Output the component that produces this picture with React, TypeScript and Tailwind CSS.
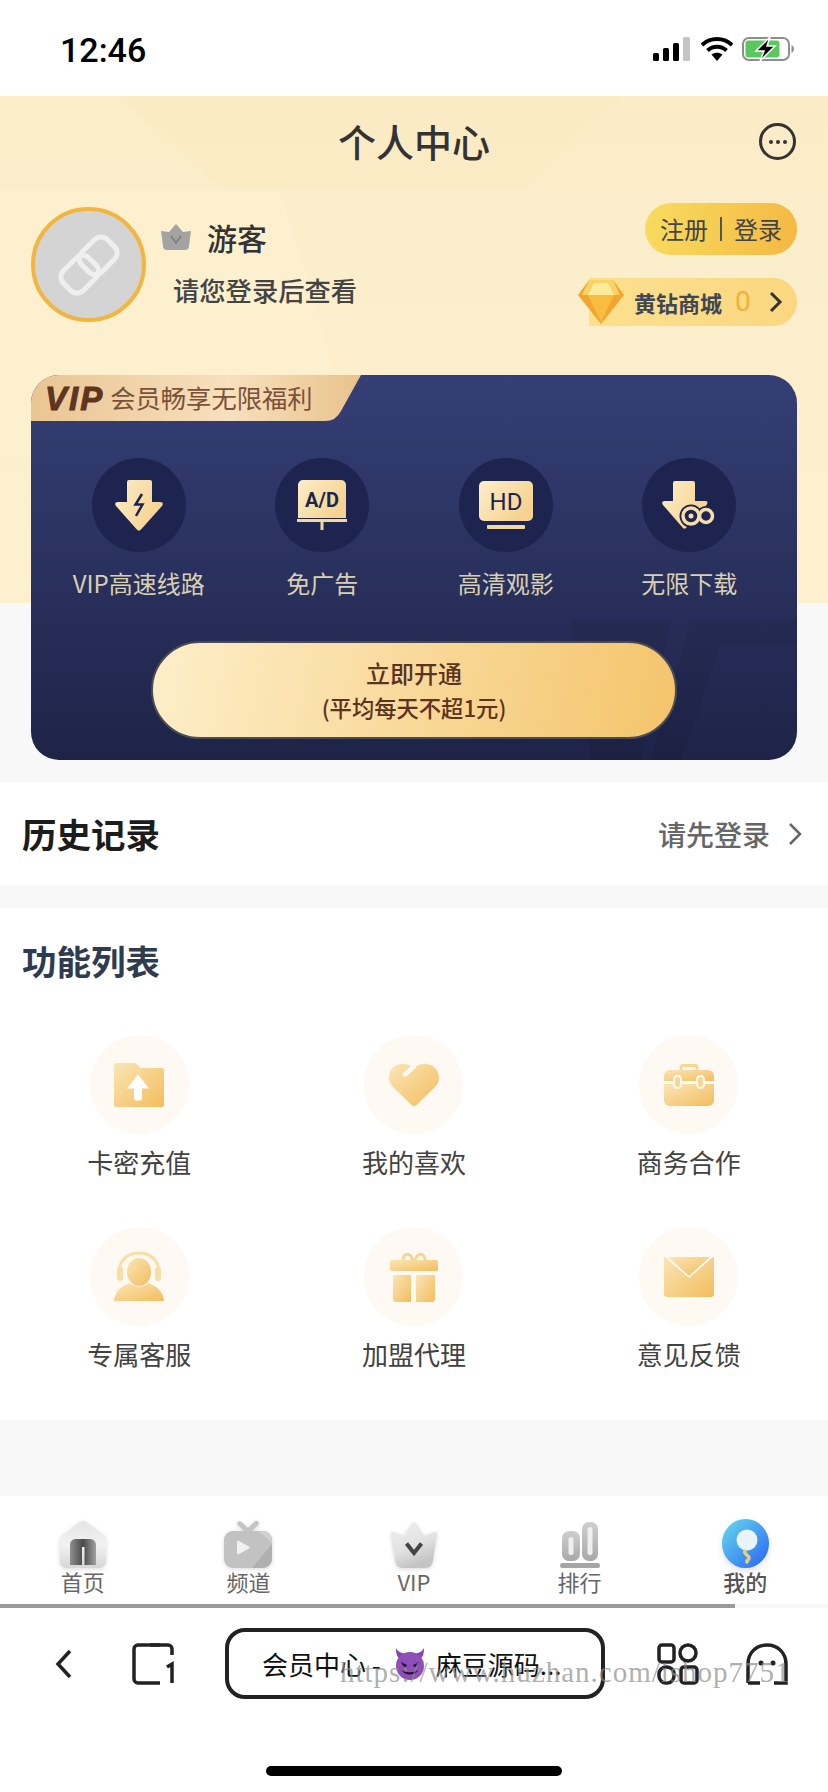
import type { ReactNode } from 'react';

const CJK = 'font-["Noto_Sans_CJK_SC","Noto_Sans",sans-serif]';

function GoldDefs({ id }: { id: string }) {
  return (
    <defs>
      <linearGradient id={id} x1="0" y1="0" x2="1" y2="1">
        <stop offset="0" stopColor="#fbe5b6" />
        <stop offset="1" stopColor="#f2bd5e" />
      </linearGradient>
    </defs>
  );
}

function VipGoldDefs({ id }: { id: string }) {
  return (
    <defs>
      <linearGradient id={id} x1="0" y1="0" x2="1" y2="0.6">
        <stop offset="0" stopColor="#fdeec9" />
        <stop offset="1" stopColor="#f5d28f" />
      </linearGradient>
    </defs>
  );
}

function SpeedIcon() {
  return (
    <svg width="48" height="51" viewBox="0 0 48 51">
      <VipGoldDefs id="v1" />
      <path d="M12 2a2 2 0 0 1 2-2h21a2 2 0 0 1 2 2v20h8c3 0 3.500 2 2 4L26 49.500c-1.200 1.500-3 1.500-4.200 0L1 26c-1.500-2-1-4 2-4h9z" fill="url(#v1)" />
      <path d="M27 14l-6.500 10.500h7L21 36" fill="none" stroke="#1e2450" strokeWidth="2.500" />
    </svg>
  );
}

function AdIcon() {
  return (
    <svg width="50" height="50" viewBox="0 0 50 50">
      <VipGoldDefs id="v2" />
      <path d="M6 0h38a5 5 0 0 1 5 5v33H1V5a5 5 0 0 1 5-5z" fill="url(#v2)" />
      <text x="25" y="27" textAnchor="middle" fontSize="20" fontWeight="700" fill="#1e2450" fontFamily="Roboto, sans-serif">A/D</text>
      <rect x="0" y="39" width="50" height="3" fill="#f3d7a0" />
      <rect x="23.500" y="42" width="3" height="8" fill="#f3d7a0" />
    </svg>
  );
}

function HdIcon() {
  return (
    <svg width="54" height="48" viewBox="0 0 54 48">
      <VipGoldDefs id="v3" />
      <rect x="0" y="0" width="54" height="40" rx="5" fill="url(#v3)" />
      <text x="27" y="28.500" textAnchor="middle" fontSize="24" fontWeight="400" fill="#1e2450" fontFamily="Roboto, sans-serif">HD</text>
      <rect x="8" y="44" width="38" height="4" rx="1" fill="#f3d7a0" />
    </svg>
  );
}

function InfiniteIcon() {
  return (
    <svg width="54" height="48" viewBox="0 0 54 48">
      <VipGoldDefs id="v4" />
      <path d="M11 2a2 2 0 0 1 2-2h18a2 2 0 0 1 2 2v18h10c3 0 3 2 1.500 4L24 47c-1 1-2 1-3 0L1 24c-1.500-2-1-4 2-4h8z" fill="url(#v4)" />
      <circle cx="29" cy="35" r="11.500" fill="#1e2450" />
      <circle cx="44" cy="35" r="10" fill="#1e2450" />
      <circle cx="29" cy="35" r="8" fill="none" stroke="#f7dda9" strokeWidth="3.500" />
      <circle cx="29" cy="35" r="2.500" fill="#f7dda9" />
      <circle cx="44" cy="35" r="6.500" fill="none" stroke="#f7dda9" strokeWidth="3.500" />
    </svg>
  );
}

function FolderIcon() {
  return (
    <svg width="50" height="44" viewBox="0 0 50 44">
      <GoldDefs id="f1" />
      <path d="M2 0h19l6 5h21a2 2 0 0 1 2 2v35a2 2 0 0 1-2 2H2a2 2 0 0 1-2-2V2a2 2 0 0 1 2-2z" fill="url(#f1)" />
      <path d="M24 12l11 14h-7v10a2 2 0 0 1-2 2h-4a2 2 0 0 1-2-2V26h-7z" fill="#fff" transform="translate(0 -0.500)" />
    </svg>
  );
}

function HeartIcon() {
  return (
    <svg width="50" height="42" viewBox="0 0 50 42">
      <GoldDefs id="f2" />
      <path d="M13 0c5 0 9 1.500 12 4 3-2.500 6-4 11-4 8 0 14 6 14 14 0 4-2 7-5 10L28 40.500c-2 2-4 2-6 0L5 24c-3-3-5-6-5-10C0 6 5 0 13 0z" fill="url(#f2)" />
      <path d="M16 10.500l9-8" fill="none" stroke="#fef9f3" strokeWidth="4.500" strokeLinecap="round" />
    </svg>
  );
}

function CaseIcon() {
  return (
    <svg width="50" height="42" viewBox="0 0 50 42">
      <GoldDefs id="f3" />
      <path d="M17 7V3.500a2 2 0 0 1 2-2h12a2 2 0 0 1 2 2V7" fill="none" stroke="#f7d794" strokeWidth="3" />
      <path d="M6 6h38a6 6 0 0 1 6 6v5H0v-5a6 6 0 0 1 6-6z" fill="url(#f3)" />
      <path d="M0 20h50v16a6 6 0 0 1-6 6H6a6 6 0 0 1-6-6z" fill="url(#f3)" />
      <rect x="0" y="17" width="50" height="3" fill="#fef9f3" />
      <rect x="10" y="12" width="7" height="12" rx="3.500" fill="#f7d794" stroke="#fef9f3" strokeWidth="2" />
      <rect x="33" y="12" width="7" height="12" rx="3.500" fill="#f7d794" stroke="#fef9f3" strokeWidth="2" />
    </svg>
  );
}

function AgentIcon() {
  return (
    <svg width="50" height="50" viewBox="0 0 50 50">
      <GoldDefs id="f4" />
      <path d="M5 21C5 9 13 1 25 1s20 8 20 20" fill="none" stroke="#f9dda3" strokeWidth="3" />
      <rect x="3" y="15" width="6" height="14" rx="3" fill="#f9dda3" />
      <rect x="41" y="15" width="6" height="14" rx="3" fill="#f9dda3" />
      <ellipse cx="25" cy="20" rx="12" ry="14" fill="url(#f4)" />
      <path d="M16 31c4 5 14 5 18 0 9 3 15 8 16 18H0c1-10 7-15 16-18z" fill="url(#f4)" />
    </svg>
  );
}

function GiftIcon() {
  return (
    <svg width="48" height="50" viewBox="0 0 48 50">
      <GoldDefs id="f5" />
      <path d="M13 9c0-9 8-9 10 0M25 9c2-9 10-9 10 0" fill="none" stroke="#f6d592" strokeWidth="3" />
      <rect x="0" y="8" width="48" height="11" rx="2" fill="url(#f5)" />
      <path d="M3 23h18v27H6a3 3 0 0 1-3-3z" fill="url(#f5)" />
      <path d="M26 23h19v24a3 3 0 0 1-3 3H26z" fill="url(#f5)" />
    </svg>
  );
}

function MailIcon() {
  return (
    <svg width="50" height="40" viewBox="0 0 50 40">
      <GoldDefs id="f6" />
      <path d="M1 0l24 21L49 0c.700 0 1 .500 1 1v36a3 3 0 0 1-3 3H3a3 3 0 0 1-3-3V1c0-.500.300-1 1-1z" fill="url(#f6)" />
      <path d="M4 0h42L25 19z" fill="url(#f6)" />
    </svg>
  );
}

function HomeTab() {
  return (
    <svg width="46" height="47" viewBox="0 0 46 47" className="drop-shadow-sm">
      <defs>
        <linearGradient id="t1" x1="0" y1="0" x2="0" y2="1">
          <stop offset="0" stopColor="#e4e4e4" />
          <stop offset="0.500" stopColor="#f2f2f2" />
          <stop offset="1" stopColor="#d6d6d6" />
        </linearGradient>
        <linearGradient id="t1b" x1="0" y1="0" x2="1" y2="0">
          <stop offset="0" stopColor="#8f8f8f" />
          <stop offset="0.500" stopColor="#4a4a4a" />
          <stop offset="1" stopColor="#a0a0a0" />
        </linearGradient>
      </defs>
      <path d="M20 1c2-1.300 4-1.300 6 0l16 12c2.500 2 4 4 4 7v20a7 7 0 0 1-7 7H7a7 7 0 0 1-7-7V20c0-3 1.500-5 4-7z" fill="url(#t1)" />
      <path d="M10 44V24c0-4 3-6 6-6h14c4 0 6 3 6 6v20H24.500V26h-2.500v18z" fill="url(#t1b)" />
    </svg>
  );
}

function ChannelTab() {
  return (
    <svg width="48" height="47" viewBox="0 0 48 47" className="drop-shadow-sm">
      <path d="M14 1c1-1 2.500-1 3.500 0L24 7l6.500-6.500c1-1 2.500-1 3.500 0s1 2.500 0 3.500l-8 8h-4l-8-8c-1-1-1-2.500 0-3.500z" fill="#c4c4c4" />
      <rect x="0" y="10" width="48" height="37" rx="9" fill="#c2c2c2" />
      <path d="M28 47l20-24v15a9 9 0 0 1-9 9z" fill="#b0b0b0" />
      <path d="M35 10l13 12v-3a9 9 0 0 0-9-9z" fill="#d0d0d0" />
      <path d="M13 21c0-1 1-1.500 2-1l10 5.500c1 .500 1 1.500 0 2L15 33c-1 .500-2 0-2-1z" fill="#f1f1f1" />
    </svg>
  );
}

function VipTab() {
  return (
    <svg width="46" height="46" viewBox="0 0 46 46" className="drop-shadow-sm">
      <defs>
        <linearGradient id="t3" x1="0" y1="0" x2="0.400" y2="1">
          <stop offset="0" stopColor="#efefef" />
          <stop offset="0.600" stopColor="#e2e2e2" />
          <stop offset="1" stopColor="#c4c4c4" />
        </linearGradient>
      </defs>
      <path d="M21.500 1c1-1.300 2-1.300 3 0L33 14l11-4c1-.500 2 0 2 1.500L42 38c-.500 5-3 8-8 8H12c-5 0-7.500-3-8-8L0 11.500C0 10 1 9.500 2 10l11 4z" fill="url(#t3)" />
      <path d="M15.500 21.500L23 31l7.500-9.500" fill="none" stroke="#444" strokeWidth="4" />
    </svg>
  );
}

function RankTab() {
  return (
    <svg width="40" height="46" viewBox="0 0 40 46">
      <defs>
        <linearGradient id="t4" x1="0" y1="0" x2="0" y2="1">
          <stop offset="0" stopColor="#cfcfcf" />
          <stop offset="1" stopColor="#a8a8a8" />
        </linearGradient>
      </defs>
      <rect x="2" y="9" width="18" height="30" rx="7" fill="url(#t4)" />
      <rect x="8.500" y="15" width="5" height="18" rx="2.500" fill="#efefef" />
      <rect x="22" y="0" width="16" height="39" rx="7" fill="url(#t4)" />
      <rect x="27.500" y="5" width="5" height="28" rx="2.500" fill="#efefef" />
      <rect x="0" y="41" width="40" height="5" rx="2.500" fill="#a6a6a6" />
    </svg>
  );
}

function MeTab() {
  return (
    <svg width="47" height="49" viewBox="0 0 47 49" className="drop-shadow-md">
      <defs>
        <linearGradient id="t5" x1="0.100" y1="0.100" x2="0.900" y2="0.900">
          <stop offset="0" stopColor="#60d0ee" />
          <stop offset="1" stopColor="#2f6ff2" />
        </linearGradient>
      </defs>
      <ellipse cx="23.500" cy="24.500" rx="23.500" ry="24.500" fill="url(#t5)" />
      <circle cx="25" cy="21" r="10.500" fill="#e8f3fb" />
      <path d="M23 32c-2 3 4 4 4 7s-3 2-2 4" fill="none" stroke="#e9cf7c" strokeWidth="3.500" strokeLinecap="round" />
    </svg>
  );
}

function DevilEmoji() {
  return (
    <svg width="34" height="34" viewBox="0 0 34 34" className="shrink-0">
      <path d="M3 1c0 6 1 9 4 11l6-5C9 6 5 5 3 1zM31 1c0 6-1 9-4 11l-6-5c4-1 8-2 10-6z" fill="#8a44ad" />
      <circle cx="17" cy="19" r="14" fill="#8e4fb8" />
      <path d="M8 15l6 3-1 2c-2 0-4-2-5-5zM26 15l-6 3 1 2c2 0 4-2 5-5z" fill="#2a1536" />
      <path d="M9 23c3 3 13 3 16 0-2 6-14 6-16 0z" fill="#2a1536" />
    </svg>
  );
}

function Feature({ icon, label }: { icon: ReactNode; label: string }) {
  return (
    <div className="flex flex-col items-center">
      <div className="flex h-[99px] w-[99px] items-center justify-center rounded-full bg-[#fef9f3]">{icon}</div>
      <span className="mt-[9px] text-[26px] leading-[38px] text-[#424242]">{label}</span>
    </div>
  );
}

function Perk({ icon, label }: { icon: ReactNode; label: string }) {
  return (
    <div className="flex flex-col items-center">
      <div className="flex h-[94px] w-[94px] items-center justify-center rounded-full bg-[#1e2450]">{icon}</div>
      <span className="mt-[13px] text-[24px] leading-[36px] text-[#d9d0b1]">{label}</span>
    </div>
  );
}

function Tab({ icon, label, active }: { icon: ReactNode; label: string; active?: boolean }) {
  return (
    <div className="flex flex-col items-center">
      <div className="flex h-[52px] items-end">{icon}</div>
      <span className={`-mt-px text-[22px] leading-[28px] ${active ? 'font-medium text-[#555]' : 'text-[#666]'}`}>{label}</span>
    </div>
  );
}

export default function App() {
  return (
    <div className={`relative flex h-[1792px] w-[828px] flex-col overflow-hidden bg-[#f8f8f9] ${CJK}`}>
      {/* status bar */}
      <div className="flex h-[96px] shrink-0 items-center justify-between bg-white pl-[60px] pr-[34px] pt-[2px]">
        <span className="mt-[2px] font-['Roboto',sans-serif] text-[34px] font-medium text-black">12:46</span>
        <div className="flex items-center">
          <svg width="38" height="24" viewBox="0 0 38 24">
            <rect x="0" y="16" width="6" height="8" rx="1.500" fill="#000" />
            <rect x="10" y="11" width="6" height="13" rx="1.500" fill="#000" />
            <rect x="20" y="6" width="6" height="18" rx="1.500" fill="#000" />
            <rect x="30" y="0" width="7" height="24" rx="1.500" fill="#c4c4c4" />
          </svg>
          <svg width="32" height="24" viewBox="0 0 32 24" className="ml-[10px]">
            <path d="M1 8c8.500-8 21.500-8 30 0" fill="none" stroke="#000" strokeWidth="4" />
            <path d="M6.500 13.500c5.500-5 13.500-5 19 0" fill="none" stroke="#000" strokeWidth="4" />
            <path d="M10.500 17.500L16 24l5.500-6.500c-3.500-2.500-7.500-2.500-11 0z" fill="#000" />
          </svg>
          <svg width="52" height="26" viewBox="0 0 52 26" className="ml-[9px]">
            <rect x="1" y="2" width="46" height="22" rx="6" fill="none" stroke="#8e8e8e" strokeWidth="2" />
            <rect x="3.500" y="4.500" width="34" height="17" rx="3" fill="#5ac85f" />
            <path d="M49.500 9c1.500 1 2.500 2.500 2.500 4s-1 3-2.500 4z" fill="#8e8e8e" />
            <path d="M28 1L14 15h8l-4 10 15-15h-8l3-9z" fill="#000" stroke="#fff" strokeWidth="1.500" />
          </svg>
        </div>
      </div>

      {/* header + vip card share this backdrop */}
      <div className="relative h-[686px] shrink-0 bg-[linear-gradient(#fbedc8_0,#fdf0ce_507px,#f8f8f9_507px)]">
        <svg width="828" height="507" viewBox="0 0 828 507" className="absolute left-0 top-0">
          <path d="M118 0L222 94H520L624 0z" fill="#fbe9c1" opacity="0.5" />
          <path d="M0 94H280L340 290 400 360H0z" fill="#fdf1d2" opacity="0.5" />
          <path d="M450 94H828V0L624 0 520 94z" fill="#fcecc6" opacity="0.4" />
        </svg>

        <div className="relative flex h-[92px] items-center justify-center">
          <h1 className="-mt-[2px] text-[38px] font-medium leading-none text-[#333]">个人中心</h1>
          <div className="absolute right-[32px] top-[27px] flex h-[37px] w-[37px] items-center justify-center gap-[3px] rounded-full border-[3px] border-[#333]">
            <span className="h-[4px] w-[4px] rounded-full bg-[#333]" />
            <span className="h-[4px] w-[4px] rounded-full bg-[#333]" />
            <span className="h-[4px] w-[4px] rounded-full bg-[#333]" />
          </div>
        </div>

        {/* profile row */}
        <div className="relative flex h-[187px] items-start pl-[31px] pr-[31px] pt-[15px]">
          <div className="mt-[4px] flex h-[115px] w-[115px] shrink-0 items-center justify-center rounded-full border-[4px] border-[#f3b541] bg-[#d4d4d4]">
            <svg width="64" height="64" viewBox="0 0 64 64">
              <g fill="none" stroke="#efefef" strokeWidth="5" transform="rotate(-45 32 32)">
                <rect x="1" y="18" width="36" height="28" rx="9" />
                <rect x="27" y="18" width="36" height="28" rx="9" />
              </g>
            </svg>
          </div>
          <div className="ml-[15px] flex flex-col">
            <div className="mt-[12px] flex items-center">
              <svg width="30" height="26" viewBox="0 0 30 26">
                <path d="M15 0l7 8 8-1-2 15a4 4 0 0 1-4 4H6a4 4 0 0 1-4-4L0 7l8 1z" fill="#a3a3a3" />
                <path d="M10 12l5 7 5-7" fill="none" stroke="#7d7d7d" strokeWidth="1.500" />
              </svg>
              <span className="ml-[16px] text-[30px] font-medium leading-[44px] text-[#333]">游客</span>
            </div>
            <span className="ml-[12px] mt-[13px] text-[26.300px] font-medium leading-[36px] text-[#444]">请您登录后查看</span>
          </div>
          <div className="ml-auto flex flex-col items-end">
            <div className="flex h-[52px] w-[152px] items-center justify-center rounded-full bg-[linear-gradient(100deg,#f8dc5f,#f4b843)] text-[24px] text-[#444]">
              注册
              <span className="mx-[12px] h-[24px] w-[2px] bg-[#555]" />
              登录
            </div>
            <div className="relative mt-[23px] flex h-[48px] w-[208px] items-center rounded-r-full bg-[linear-gradient(90deg,#fbe08f,#fad77f)] pl-[45px]">
              <svg width="46" height="44" viewBox="0 0 46 44" className="absolute -left-[11px] top-[2px]">
                <path d="M11 0h24l11 15L23 44 0 15z" fill="#f3a52f" />
                <path d="M11 0h24l7 15H4z" fill="#fbd264" />
                <path d="M16 3h14l6 12H10z" fill="#fdeb9d" />
                <path d="M10 15h26L23 42z" fill="#f8bd40" />
              </svg>
              <span className="text-[22px] font-bold text-[#3f4654]">黄钻商城</span>
              <span className="ml-[13px] font-['Roboto',sans-serif] text-[28px] text-[#f1b23a]">0</span>
              <svg width="14" height="22" viewBox="0 0 14 22" className="ml-[18px]">
                <path d="M2 2l9 9-9 9" fill="none" stroke="#333" strokeWidth="3" />
              </svg>
            </div>
          </div>
        </div>

        {/* vip card */}
        <div className="relative mx-[31px] h-[385px] overflow-hidden rounded-[28px] bg-[linear-gradient(#353f75,#1e2347)]">
          <svg width="766" height="385" viewBox="0 0 766 385" className="absolute left-0 top-0">
            <path d="M540 245H640L610 385H560zM660 245H766V270H690L650 385H620z" fill="#000000" opacity="0.05" />
          </svg>
          <div className="relative flex h-[46px] w-[330px] items-center bg-[linear-gradient(90deg,#e9c592,#f7e0bd_60%,#e8c28c)] pl-[14px] [clip-path:path('M0_0H330L310_36Q305_46_294_46H0Z')]">
            <span className="font-['Liberation_Sans',sans-serif] text-[33px] font-bold italic leading-none tracking-[2px] text-[#5f3420] [-webkit-text-stroke:1px_#5f3420]">VIP</span>
            <span className="ml-[6px] text-[25.300px] leading-none text-[#7b5238]">会员畅享无限福利</span>
          </div>
          <div className="relative mt-[38px] -translate-y-px grid grid-cols-4 px-[16px]">
            <Perk icon={<SpeedIcon />} label="VIP高速线路" />
            <Perk icon={<AdIcon />} label="免广告" />
            <Perk icon={<HdIcon />} label="高清观影" />
            <Perk icon={<InfiniteIcon />} label="无限下载" />
          </div>
          <div className="relative mx-auto mt-[39px] flex h-[98px] w-[526px] flex-col items-center justify-center rounded-full border-[2px] border-[#4b4b55] bg-[linear-gradient(100deg,#fdeec9,#f4c46b)] pb-[2px] text-[#5c3320]">
            <span className="text-[24px] font-medium leading-[35px]">立即开通</span>
            <span className="text-[22.300px] font-medium leading-[34px]">(平均每天不超1元)</span>
          </div>
        </div>
      </div>

      {/* history */}
      <div className="flex h-[103px] shrink-0 items-center justify-between bg-white pl-[22px] pr-[26px]">
        <span className="text-[34.500px] font-bold text-[#1c1c1c]">历史记录</span>
        <div className="flex items-center">
          <span className="text-[28px] font-medium text-[#666]">请先登录</span>
          <svg width="14" height="24" viewBox="0 0 14 24" className="ml-[18px]">
            <path d="M2 2l10 10L2 22" fill="none" stroke="#666" strokeWidth="2.500" />
          </svg>
        </div>
      </div>

      {/* feature list */}
      <div className="mt-[23px] h-[512px] shrink-0 bg-white pt-[26px]">
        <h2 className="pl-[22px] text-[34.500px] font-semibold leading-[52px] text-[#2f3b4e]">功能列表</h2>
        <div className="mt-[49px] grid grid-cols-3 gap-y-[46px] px-[2px]">
          <Feature icon={<FolderIcon />} label="卡密充值" />
          <Feature icon={<HeartIcon />} label="我的喜欢" />
          <Feature icon={<CaseIcon />} label="商务合作" />
          <Feature icon={<AgentIcon />} label="专属客服" />
          <Feature icon={<GiftIcon />} label="加盟代理" />
          <Feature icon={<MailIcon />} label="意见反馈" />
        </div>
      </div>

      {/* tab bar */}
      <div className="mt-[76px] grid h-[108px] shrink-0 grid-cols-5 bg-white pt-[20px]">
        <Tab icon={<HomeTab />} label="首页" />
        <Tab icon={<ChannelTab />} label="频道" />
        <Tab icon={<VipTab />} label="VIP" />
        <Tab icon={<RankTab />} label="排行" />
        <Tab icon={<MeTab />} label="我的" active />
      </div>
      <div className="h-[4px] w-[735px] shrink-0 bg-[#9b9b9b]" />

      {/* browser toolbar */}
      <div className="relative flex-1 bg-white">
        <div className="mt-[20px] flex h-[71px] items-center">
          <svg width="18" height="30" viewBox="0 0 18 30" className="ml-[55px]">
            <path d="M15 2L3 15l12 13" fill="none" stroke="#222" strokeWidth="3.500" />
          </svg>
          <svg width="42" height="42" viewBox="0 0 42 42" className="ml-[59px]">
            <path d="M28 2H6a4 4 0 0 0-4 4v30a4 4 0 0 0 4 4h22" fill="none" stroke="#222" strokeWidth="3.500" />
            <path d="M18 2h18a4 4 0 0 1 4 4v6" fill="none" stroke="#222" strokeWidth="3.500" />
            <path d="M35 24l5-3v19" fill="none" stroke="#222" strokeWidth="3.500" />
          </svg>
          <div className="ml-[51px] flex h-[71px] w-[380px] items-center rounded-[20px] border-[4px] border-[#222] pl-[33px] text-[26px] text-[#111]">
            <span>会员中心 -</span>
            <span className="ml-[12px] mr-[9px] flex"><DevilEmoji /></span>
            <span>麻豆源码...</span>
          </div>
          <svg width="42" height="42" viewBox="0 0 42 42" className="ml-[52px]">
            <rect x="2" y="2" width="15" height="17" rx="3" fill="none" stroke="#222" strokeWidth="3.500" />
            <circle cx="31" cy="10" r="8" fill="none" stroke="#222" strokeWidth="3.500" />
            <rect x="2" y="24" width="15" height="16" rx="7" fill="none" stroke="#222" strokeWidth="3.500" />
            <rect x="24" y="24" width="16" height="16" rx="3" fill="none" stroke="#222" strokeWidth="3.500" />
          </svg>
          <svg width="42" height="42" viewBox="0 0 42 42" className="ml-[47px]">
            <path d="M2 40V21C2 10 10 2 21 2s19 8 19 19v19H28M2 40h12" fill="none" stroke="#222" strokeWidth="3.500" />
            <circle cx="15" cy="20" r="2.500" fill="#222" />
            <circle cx="27" cy="20" r="2.500" fill="#222" />
          </svg>
        </div>
        <span className="absolute left-[340px] top-[50px] whitespace-nowrap font-['Liberation_Serif',serif] text-[29px] leading-none tracking-[1px] text-[#8c8c8c]/70">https://www.huzhan.com/ishop7751</span>
        <div className="absolute bottom-[16px] left-[266px] h-[10px] w-[296px] rounded-full bg-black" />
      </div>
    </div>
  );
}
